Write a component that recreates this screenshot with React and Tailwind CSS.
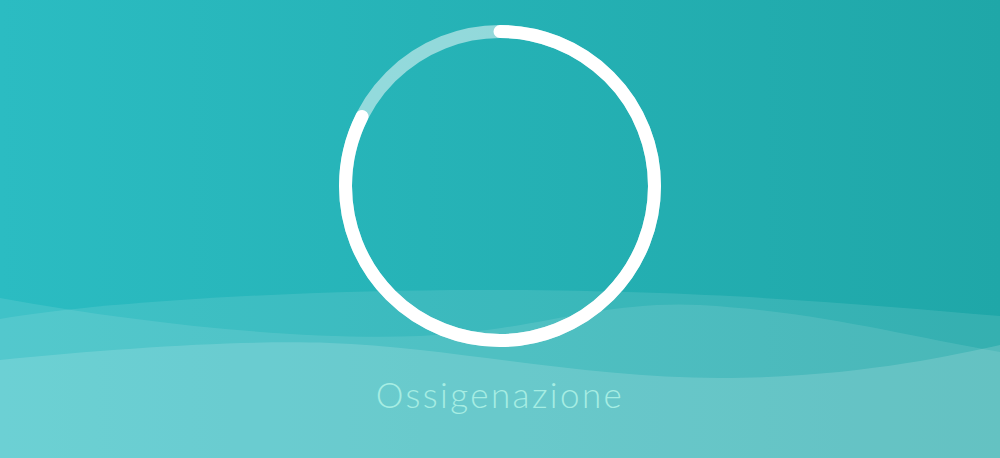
import React from 'react';

const RADIUS = 154.5;
const CIRC = 2 * Math.PI * RADIUS;
const PROGRESS = 0.824;

function Waves() {
  return (
    <svg
      className="absolute inset-0 w-full h-full"
      viewBox="0 0 1000 458"
      preserveAspectRatio="none"
    >
      <path
        d="M0 298 C 150 325, 300 340, 420 336 C 530 332, 600 300, 700 305 C 820 312, 900 335, 1000 352 L1000 458 L0 458 Z"
        fill="rgba(255,255,255,0.1)"
      />
      <path
        d="M0 319 C 100 302, 300 290, 480 290 C 700 290, 850 303, 1000 316 L1000 458 L0 458 Z"
        fill="rgba(255,255,255,0.1)"
      />
      <path
        d="M0 360 C 120 348, 240 340, 330 343 C 450 347, 580 378, 720 378 C 850 378, 950 356, 1000 345 L1000 458 L0 458 Z"
        fill="rgba(255,255,255,0.15)"
      />
    </svg>
  );
}

function ProgressRing() {
  return (
    <svg width="330" height="330" viewBox="0 0 330 330" className="block">
      <circle
        cx="165"
        cy="165"
        r={RADIUS}
        fill="none"
        stroke="rgba(255,255,255,0.5)"
        strokeWidth="13"
      />
      <circle
        cx="165"
        cy="165"
        r={RADIUS}
        fill="none"
        stroke="#ffffff"
        strokeWidth="13"
        strokeLinecap="round"
        strokeDasharray={`${CIRC * PROGRESS} ${CIRC}`}
        transform="rotate(-90 165 165)"
      />
    </svg>
  );
}

export default function App() {
  return (
    <div className="relative w-[1000px] h-[458px] overflow-hidden bg-linear-to-r from-[#2bbcc2] to-[#1fa7a8]">
      <Waves />
      <div className="relative flex flex-col items-center pt-[21px]">
        <ProgressRing />
        <p className="mt-[26px] text-[35px] leading-none font-light tracking-[2.4px] text-[#a6ede3] font-['Lato',sans-serif]">
          Ossigenazione
        </p>
      </div>
    </div>
  );
}
